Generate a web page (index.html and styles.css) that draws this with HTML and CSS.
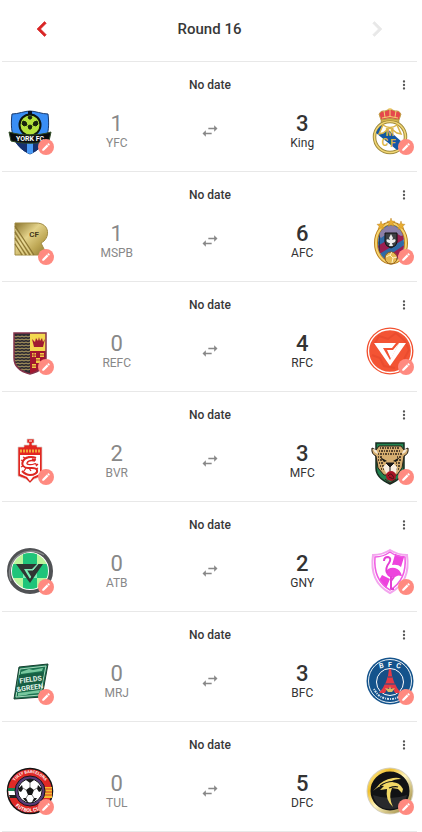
FILE: index.html
```html
<!DOCTYPE html>
<html lang="en">
<head>
	<meta charset="UTF-8">
	<meta name="viewport" content="width=device-width, initial-scale=1.0">
	<link rel="stylesheet" href="styles.css">
	<title>Round 16</title>
</head>
<body>
	<svg class="sprite" aria-hidden="true">
		<symbol id="prev" viewBox="0 0 24 24"><path d="M15.41 7.41 14 6l-6 6 6 6 1.41-1.41L10.83 12z"/></symbol>
		<symbol id="next" viewBox="0 0 24 24"><path d="M10 6 8.59 7.41 13.17 12l-4.58 4.59L10 18l6-6z"/></symbol>
		<symbol id="more" viewBox="0 0 24 24"><path d="M12 8a2 2 0 1 0 0-4 2 2 0 0 0 0 4zm0 2a2 2 0 1 0 0 4 2 2 0 0 0 0-4zm0 6a2 2 0 1 0 0 4 2 2 0 0 0 0-4z"/></symbol>
		<symbol id="swap" viewBox="0 0 24 24"><path d="M6.99 11 3 15l3.99 4v-3H14v-2H6.99v-3zM21 9l-3.99-4v3H10v2h7.01v3L21 9z"/></symbol>
		<symbol id="pencil" viewBox="0 0 24 24"><path d="M3 17.25V21h3.75L17.81 9.94l-3.75-3.75L3 17.25zM20.71 7.04a1 1 0 0 0 0-1.41l-2.34-2.34a1 1 0 0 0-1.41 0l-1.83 1.83 3.75 3.75 1.83-1.83z"/></symbol>
	</svg>
	<main class="fixtures">
		<header class="header">
			<button class="nav" aria-label="Previous round"><svg><use href="#prev"/></svg></button>
			<h1>Round 16</h1>
			<button class="nav next" aria-label="Next round" disabled><svg><use href="#next"/></svg></button>
		</header>

		<section class="match">
			<div class="match-head">
				<p>No date</p>
				<button class="more" aria-label="Options"><svg><use href="#more"/></svg></button>
			</div>
			<div class="teams">
				<div class="logo">
					<svg viewBox="0 0 48 48">
						<path d="M6 7C12 7 19 4 24 4s12 3 18 3c2 16 0 32-18 40C6 39 4 23 6 7z" fill="#3a8ef5" stroke="#17386d"/>
						<path d="M8 32h32c-3 7-9 12-16 15C17 44 11 39 8 32z" fill="#16316f"/>
						<path d="M21 33h6v13l-3 1-3-1z" fill="#4a9bf7"/>
						<path d="M22 4h4v7h-4z" fill="#0b1222"/>
						<circle cx="24" cy="18" r="10.5" fill="#b3e23c" stroke="#0d1610" stroke-width="2"/>
						<path d="m22 10 2-1 2 1-1 2h-2zM17 14l3 1 1 3-3 1-2-2zM31 14l-3 1-1 3 3 1 2-2zM22 19l2-1 2 1-1 3h-2z" fill="#17230d" stroke="#17230d"/>
						<path d="M3 25c14 4 28 4 42 0l-2 9c-13 3-25 3-38 0z" fill="#0a0d10" stroke="#304b25"/>
						<text x="24" y="34" class="york">YORK FC</text>
					</svg>
					<button class="edit" aria-label="Edit score"><svg><use href="#pencil"/></svg></button>
				</div>
				<div class="team"><strong>1</strong><span>YFC</span></div>
				<svg class="swap"><use href="#swap"/></svg>
				<div class="team winner"><strong>3</strong><span>King</span></div>
				<div class="logo">
					<svg viewBox="0 0 48 48">
						<circle cx="24" cy="30" r="15.5" fill="#fff" stroke="#a08c3f" stroke-width="3.5"/>
						<circle cx="24" cy="30" r="15.5" fill="none" stroke="#f3d775" stroke-width="1.5"/>
						<path d="M10 26q2-6 7-8l20 18q-2 5-6 7z" fill="#1257a4"/>
						<path d="M17 18q7 5 14 0l4 9-4-1-7-5-7 5-4 1z" fill="#fff" stroke="#d9b449" stroke-width="1.500"/>
						<text x="24" y="29" class="monogram">M</text>
						<text x="19" y="39" class="monogram">C</text>
						<text x="27" y="40" class="monogram">F</text>
						<path d="M15 13 13 7q2-4 6-3l5-2 5 2q4-1 6 3l-2 6q-9-3-18 0z" fill="#e5484d" stroke="#c2a448"/>
						<path d="M16 11q8-3 16 0M18 4l1 6M30 4l-1 6M24 1v9M22 2h4" fill="none" stroke="#f2d273"/>
						<path d="M15 13q9-3 18 0v2q-9-3-18 0z" fill="#d8b64c" stroke="#9b8235" stroke-width=".5"/>
					</svg>
					<button class="edit" aria-label="Edit score"><svg><use href="#pencil"/></svg></button>
				</div>
			</div>
		</section>

		<section class="match">
			<div class="match-head">
				<p>No date</p>
				<button class="more" aria-label="Options"><svg><use href="#more"/></svg></button>
			</div>
			<div class="teams">
				<div class="logo">
					<svg viewBox="0 0 48 48">
						<defs>
							<linearGradient id="gold" x2="1" y2="1">
								<stop offset="0" stop-color="#8a742d"/>
								<stop offset=".4" stop-color="#e3d28a"/>
								<stop offset=".7" stop-color="#bda653"/>
								<stop offset="1" stop-color="#8a7430"/>
							</linearGradient>
						</defs>
						<path d="M9 6h21c15 0 14 16 5 20l6 12H9z" fill="url(#gold)" stroke="#a08b43"/>
						<path d="M9 9l19 29M9 15l15 23M9 21l11 17M9 27l7 11" stroke="#8a7432" stroke-width="1.2"/>
						<path d="M9 12l17 26M9 18l13 20M9 24l9 14" stroke="#efe2a6" stroke-width=".7"/>
						<text x="28" y="20" class="cf">CF</text>
					</svg>
					<button class="edit" aria-label="Edit score"><svg><use href="#pencil"/></svg></button>
				</div>
				<div class="team"><strong>1</strong><span>MSPB</span></div>
				<svg class="swap"><use href="#swap"/></svg>
				<div class="team winner"><strong>6</strong><span>AFC</span></div>
				<div class="logo">
					<svg viewBox="0 0 48 48">
						<clipPath id="oval"><ellipse cx="25" cy="26" rx="13" ry="18"/></clipPath>
						<ellipse cx="25" cy="26" rx="15" ry="19.5" fill="#fff" stroke="#b97f1f" stroke-width="4"/>
						<ellipse cx="25" cy="26" rx="15" ry="19.5" fill="none" stroke="#f5d470" stroke-width="2"/>
						<g clip-path="url(#oval)">
							<path d="M10 5h30v42H10z" fill="#2f6aa6"/>
							<path d="M10 30 40 12v9L10 39zM10 47l30-20v8L18 50z" fill="#9a1f50"/>
							<path d="M12 18q13-19 26 0l-3 1q-9-7-20 2z" fill="#8b7fa8"/>
							<path d="M12 9q2 2 1 34" fill="none" stroke="#27324a"/>
						</g>
						<path d="M19 16h12v9q0 4-6 6-6-2-6-6z" fill="#3d4144" stroke="#111"/>
						<path d="m25 17 2 4-1 2q5-2 3 2l-2 1h-1l1 3h-4l1-3h-1l-2-1q-2-4 3-2l-1-2z" fill="#eee"/>
						<circle cx="25" cy="41" r="6" fill="#e5bb56" stroke="#8d5b1c"/>
						<path d="M20 40l4-2 2-3m-2 3 3 3 4-1m-4 1-1 5" fill="none" stroke="#fff1c5"/>
						<path d="m25 1 1 3 3 .3-2 2 .8 3L25 8l-2.800 1.300.8-3-2-2 3-.3zM15 4l1 3 3 .3-2 2 .8 3L15 11l-2.800 1.300.8-3-2-2 3-.3zM35 4l1 3 3 .3-2 2 .8 3L35 11l-2.800 1.300.8-3-2-2 3-.3z" fill="#e7ac31" stroke="#b77c1d" stroke-width=".4"/>
					</svg>
					<button class="edit" aria-label="Edit score"><svg><use href="#pencil"/></svg></button>
				</div>
			</div>
		</section>

		<section class="match">
			<div class="match-head">
				<p>No date</p>
				<button class="more" aria-label="Options"><svg><use href="#more"/></svg></button>
			</div>
			<div class="teams">
				<div class="logo">
					<svg viewBox="0 0 48 48">
						<clipPath id="castle"><path d="M8 6h32v25q0 12-16 16Q8 43 8 31z"/></clipPath>
						<g clip-path="url(#castle)">
							<path d="M8 6h16v41H8z" fill="#302d32"/>
							<path d="M24 6h16v18H24z" fill="#f4d84f"/>
							<path d="M24 24h16v23H24z" fill="#a3162f"/>
							<path d="M8 9l2 1 2-1 2 1 2-1 2 1 2-1 2 1 2-1M8 12l2 1 2-1 2 1 2-1 2 1 2-1 2 1 2-1M8 15l2 1 2-1 2 1 2-1 2 1 2-1 2 1 2-1M8 18l2 1 2-1 2 1 2-1 2 1 2-1 2 1 2-1M8 21l2 1 2-1 2 1 2-1 2 1 2-1 2 1 2-1M8 24l2 1 2-1 2 1 2-1 2 1 2-1 2 1 2-1M8 27l2 1 2-1 2 1 2-1 2 1 2-1 2 1 2-1M8 30l2 1 2-1 2 1 2-1 2 1 2-1 2 1 2-1M8 33l2 1 2-1 2 1 2-1 2 1 2-1 2 1 2-1M8 36l2 1 2-1 2 1 2-1 2 1 2-1 2 1 2-1M8 39l2 1 2-1 2 1 2-1 2 1 2-1 2 1 2-1M8 42l2 1 2-1 2 1 2-1 2 1 2-1 2 1 2-1" fill="none" stroke="#b8a464"/>
						</g>
						<path d="m26 12 3 3 1-4 2 3 1-4 1 4 2-3 1 4 2-3-2 8h-9z" fill="#a11c31"/>
						<path d="M26 26h4v4h-4zM30 31h4v5h-4zM34 26h4v4h-4zM26 37h4v4h-4z" fill="#f0ca45"/>
						<path d="M25 28h6M28 25v6M29 33h6M33 28h6M25 39h6" stroke="#a3162f" stroke-width=".8"/>
						<path d="M8 6h32v25q0 12-16 16Q8 43 8 31z" fill="none" stroke="#85334a" stroke-width="1.500"/>
					</svg>
					<button class="edit" aria-label="Edit score"><svg><use href="#pencil"/></svg></button>
				</div>
				<div class="team"><strong>0</strong><span>REFC</span></div>
				<svg class="swap"><use href="#swap"/></svg>
				<div class="team winner"><strong>4</strong><span>RFC</span></div>
				<div class="logo">
					<svg viewBox="0 0 48 48">
						<circle cx="24" cy="24" r="23.500" fill="#f2502f"/>
						<circle cx="24" cy="24" r="21.500" fill="#f35434" stroke="#fff" stroke-width="1.300"/>
						<path d="M8 18l5-9 9 3 8-6 9 8 4 9-5 9M6 28l8 3 4 8 11 2" fill="none" stroke="#ea4c2f" stroke-width="2"/>
						<path d="M8 16h22l-4 5h-9l7 12 9-17h7L24 39z" fill="#fff"/>
						<path d="M21 23h6l6-7-8 16z" fill="#fff"/>
						<path d="m32 15-5 7h-6" fill="none" stroke="#f2502f"/>
					</svg>
					<button class="edit" aria-label="Edit score"><svg><use href="#pencil"/></svg></button>
				</div>
			</div>
		</section>

		<section class="match">
			<div class="match-head">
				<p>No date</p>
				<button class="more" aria-label="Options"><svg><use href="#more"/></svg></button>
			</div>
			<div class="teams">
				<div class="logo">
					<svg viewBox="0 0 48 48">
						<path d="M18 10V8h5V6h-2V2h7v4h-2v2h5v2h5v29l-8 3-4 4-4-4-8-3V10z" fill="#e32620" stroke="#d9cfc9" stroke-width=".7"/>
						<path d="M14 18h20v19l-7 3-3 4-3-4-7-3z" fill="#fff"/>
						<path d="M23 4h3" stroke="#fff"/>
						<path d="M14 14h20" stroke="#f4a638" stroke-width="3" stroke-dasharray="2 1"/>
						<path d="M30 21c-5-2-11-1-13 3s1 7 5 7 8-1 9 2-3 5-7 5-6-2-8-4" fill="none" stroke="#dd2821" stroke-width="2"/>
						<path d="M29 24c-4-1-7 0-8 2s5 2 7 1 3 1 2 2M19 21l-2-1m0 4-2-1m2 6-2 1m15-1 2-2m-6-5 4 1m-7 8 2 3m-5-3-2 3m12-2 2-1M23 20v-1" fill="none" stroke="#dd2821" stroke-width="1.300"/>
					</svg>
					<button class="edit" aria-label="Edit score"><svg><use href="#pencil"/></svg></button>
				</div>
				<div class="team"><strong>2</strong><span>BVR</span></div>
				<svg class="swap"><use href="#swap"/></svg>
				<div class="team winner"><strong>3</strong><span>MFC</span></div>
				<div class="logo">
					<svg viewBox="0 0 48 48">
						<path d="M10 6h28v25q0 10-14 16Q10 41 10 31z" fill="#21834f" stroke="#172d21" stroke-width="1.500"/>
						<path d="M13 9h22l3 4 4-2q1 6-4 8l-2 12-5 7H18l-6-7-2-12q-5-2-4-8l4 2z" fill="#d5ae70" stroke="#292019"/>
						<path d="M7 12q4 0 5 5-4-1-5-5zM41 12q-4 0-5 5 4-1 5-5z" fill="#f4e8d5"/>
						<path d="M14 11h20M13 14h22M12 17h24M12 20h5m14 0h5M12 23h5m14 0h5M13 26h5m12 0h5M14 29h4m12 0h4M15 32h3m12 0h3" fill="none" stroke="#302319" stroke-width="1.500" stroke-dasharray="1 1 2 1"/>
						<path d="m14 20 7 4-3 1zM34 20l-7 4 3 1z" fill="#181713"/>
						<path d="m17 30 4-4h6l4 4-1 6-5 2-5-2z" fill="#f8eee0"/>
						<path d="M20 26h8l-4 4zM24 30v4" fill="#1a1918" stroke="#1a1918"/>
						<circle cx="25" cy="39" r="5" fill="#a71525"/>
						<path d="M22 39q3-4 5 0t-2 2l-2-1M19 42l5 4 6-4" fill="none" stroke="#4b1218"/>
					</svg>
					<button class="edit" aria-label="Edit score"><svg><use href="#pencil"/></svg></button>
				</div>
			</div>
		</section>

		<section class="match">
			<div class="match-head">
				<p>No date</p>
				<button class="more" aria-label="Options"><svg><use href="#more"/></svg></button>
			</div>
			<div class="teams">
				<div class="logo">
					<svg viewBox="0 0 48 48">
						<clipPath id="check"><circle cx="24" cy="24" r="18"/></clipPath>
						<circle cx="24" cy="24" r="21" fill="#fff" stroke="#505255" stroke-width="4"/>
						<path d="M5 34A22 22 0 0 1 38 8" fill="none" stroke="#85888a" stroke-width="1.500"/>
						<g clip-path="url(#check)">
							<path d="M4 4h40v40H4z" fill="#baf59c"/>
							<path d="M17 4h14v13H17zM4 17h13v14H4zM31 17h13v14H31zM17 31h14v13H17z" fill="#1fc47a"/>
							<path d="M17 17h14v14H17z" fill="#7af0b6"/>
						</g>
						<path d="M10 17h21l-5 5h-8l6 10 8-15h5L24 36z" fill="#303633"/>
						<path d="M21 23h6l5-6h2l-8 14z" fill="#303633"/>
						<path d="m32 17-5 6h-6" fill="none" stroke="#8fe9bd"/>
					</svg>
					<button class="edit" aria-label="Edit score"><svg><use href="#pencil"/></svg></button>
				</div>
				<div class="team"><strong>0</strong><span>ATB</span></div>
				<svg class="swap"><use href="#swap"/></svg>
				<div class="team winner"><strong>2</strong><span>GNY</span></div>
				<div class="logo">
					<svg viewBox="0 0 48 48">
						<clipPath id="pink"><path d="M9 9q8 0 15-5 7 5 15 5 3 24-15 35Q6 33 9 9z"/></clipPath>
						<path d="M7 8q9 0 17-5 8 5 17 5 4 27-17 38Q3 35 7 8z" fill="#fff" stroke="#f3a5ee" stroke-width="2"/>
						<g clip-path="url(#pink)">
							<path d="m30 4 9 3-4 13q-3-3-9-2zM16 28l8 4-5 12q-6-4-8-7z" fill="#ed43dd"/>
						</g>
						<path d="M9 10q8 0 15-5 7 5 15 5 2 23-15 33Q7 33 9 10z" fill="none" stroke="#f05be3" stroke-width="1.500"/>
						<path d="M20 25q2-5 9-4 5 1 7 8-4-1-5 0-5 3-9 0-2-2-2-4z" fill="#ed43dd"/>
						<path d="M18 14q0-4 4-4 4 1 1 6-4 5-2 10M25 29v13m0-8 3-4m-3 12h3" fill="none" stroke="#e33fd3" stroke-width="2"/>
					</svg>
					<button class="edit" aria-label="Edit score"><svg><use href="#pencil"/></svg></button>
				</div>
			</div>
		</section>

		<section class="match">
			<div class="match-head">
				<p>No date</p>
				<button class="more" aria-label="Options"><svg><use href="#more"/></svg></button>
			</div>
			<div class="teams">
				<div class="logo">
					<svg viewBox="0 0 48 48">
						<path d="m13 10 29-3-6 33-28 2z" fill="#1b7350" stroke="#173f30"/>
						<path d="m14 12 26-3-6 29-24 2z" fill="none" stroke="#a9d8bd"/>
						<path d="m15 15 8-3 4 1 10-2-1 3-21 3zM12 36l8-1 14-2-1 3-10 1-3 1-8 1z" fill="#77c79e"/>
						<path d="m13 18 25-3-3 17-25 3z" fill="#175f43"/>
						<g transform="rotate(-8 24 25)">
							<text x="25" y="25" class="fields">FIELDS</text>
							<text x="23" y="33" class="fields">&amp;GREEN</text>
						</g>
					</svg>
					<button class="edit" aria-label="Edit score"><svg><use href="#pencil"/></svg></button>
				</div>
				<div class="team"><strong>0</strong><span>MRJ</span></div>
				<svg class="swap"><use href="#swap"/></svg>
				<div class="team winner"><strong>3</strong><span>BFC</span></div>
				<div class="logo">
					<svg viewBox="0 0 48 48">
						<circle cx="24" cy="24" r="23.500" fill="#14538c"/>
						<circle cx="24" cy="24" r="21.500" fill="none" stroke="#e8f0f5"/>
						<circle cx="24" cy="25" r="13.500" fill="#174f87" stroke="#fff"/>
						<path d="M23 12h2q1 14 10 24h-6q-2-5-5-5t-5 5h-6q9-10 10-24z" fill="#e63a46"/>
						<path d="M22 20h4M19 27h10" stroke="#174f87"/>
						<path d="m24 29 1 3 4-1-3 4h-4l-3-4 4 1z" fill="#d9bd65"/>
						<text x="16" y="11" class="paris" transform="rotate(-14 16 11)">B</text>
						<text x="24" y="10" class="paris">F</text>
						<text x="32" y="11" class="paris" transform="rotate(14 32 11)">C</text>
						<path d="M8 32q5 10 16 10t16-10" fill="none" stroke="#d6e2eb" stroke-width="2" stroke-dasharray="1 1 2 1"/>
					</svg>
					<button class="edit" aria-label="Edit score"><svg><use href="#pencil"/></svg></button>
				</div>
			</div>
		</section>

		<section class="match">
			<div class="match-head">
				<p>No date</p>
				<button class="more" aria-label="Options"><svg><use href="#more"/></svg></button>
			</div>
			<div class="teams">
				<div class="logo">
					<svg viewBox="0 0 48 48">
						<circle cx="24" cy="24" r="22.500" fill="#df2926" stroke="#131313" stroke-width="1.500"/>
						<path d="M2 21h8v9H3z" fill="#fff"/>
						<path d="M2 21h8v3H2z" fill="#1b8051"/>
						<path d="M3 28h8v3H4z" fill="#222"/>
						<path d="M38 20h8v11h-8z" fill="#f4bd2e"/>
						<path d="M38 22h8m-8 3h8m-8 3h8" stroke="#d63525"/>
						<path id="upper" d="M6 24a18 18 0 0 1 36 0" fill="none"/>
						<text class="club"><textPath href="#upper" startOffset="50%">TULLY BARCELONA</textPath></text>
						<path id="lower" d="M3 24a21 21 0 0 0 42 0" fill="none"/>
						<text class="club low"><textPath href="#lower" startOffset="50%">FUTBOL CLUB</textPath></text>
						<circle cx="24" cy="24" r="15" fill="#593b78" stroke="#191519"/>
						<circle cx="24" cy="24" r="12" fill="#fff" stroke="#171717"/>
						<path d="m24 20 4 3-2 5h-4l-2-5zM20 13q4-2 8 0l-4 3zM13 21l3-3 1 4-2 3-2-1zM35 21l-3-3-1 4 2 3 2-1zM17 31l3 0 2 4q-3 0-5-4zM31 31h-3l-2 4q3 0 5-4z" fill="#151515"/>
						<path d="M24 16v4m-7 1 3 2m11-2-3 2m-2 5 2 3m-6-3-2 3" stroke="#222" stroke-width=".6"/>
					</svg>
					<button class="edit" aria-label="Edit score"><svg><use href="#pencil"/></svg></button>
				</div>
				<div class="team"><strong>0</strong><span>TUL</span></div>
				<svg class="swap"><use href="#swap"/></svg>
				<div class="team winner"><strong>5</strong><span>DFC</span></div>
				<div class="logo">
					<svg viewBox="0 0 48 48">
						<defs>
							<linearGradient id="ring" x2="1" y2="1">
								<stop offset="0" stop-color="#fff1a0"/>
								<stop offset=".25" stop-color="#f0c02e"/>
								<stop offset=".5" stop-color="#fff4bb"/>
								<stop offset="1" stop-color="#8f7930"/>
							</linearGradient>
						</defs>
						<circle cx="24" cy="24" r="22" fill="#111214" stroke="#d6d0be" stroke-width="3"/>
						<circle cx="24" cy="24" r="21" fill="none" stroke="url(#ring)" stroke-width="3"/>
						<path d="M7 28q17 6 34 0-3 14-17 14T7 28z" fill="#292a2c"/>
						<path d="M11 20q5-7 16-9 5-1 8 1-7 0-11 3 9-1 13 7l-1 4-4-4-6-1q-4 9 1 19-8-7-6-18l-7 1 4-4q-4-1-11 5z" fill="#f2d866"/>
						<path d="M14 19q8-6 17-4m-8 6q6-2 9-1" fill="none" stroke="#111214" stroke-width="1.200"/>
					</svg>
					<button class="edit" aria-label="Edit score"><svg><use href="#pencil"/></svg></button>
				</div>
			</div>
		</section>
	</main>
</body>
</html>
```

FILE: styles.css
```css
*{
	padding: 0;
	margin: 0;
	box-sizing: border-box;
}
body{
	background-color: #fff;
	color: #383838;
	font-family: Roboto, Arial, sans-serif;
	font-size: 12px;
}
button{
	display: flex;
	align-items: center;
	justify-content: center;
	border: none;
	background-color: transparent;
	cursor: pointer;
}
svg{
	display: block;
	fill: currentColor;
}
.sprite{
	display: none;
}
.fixtures{
	margin: 0 5px 0 2px;
}
.header{
	display: flex;
	align-items: center;
	justify-content: space-between;
	padding: 14px 25px 17px;
	border-bottom: 1px solid #e8e8e8;
}
.header h1{
	font-size: 15px;
	font-weight: 500;
	line-height: 20px;
}
.nav{
	color: #d92525;
}
.nav svg{
	width: 30px;
	height: 30px;
	stroke: currentColor;
	stroke-width: 0.5;
}
.next{
	color: #e8e8e8;
	cursor: default;
}
.match{
	padding: 13px 3px 16px 4px;
	border-bottom: 1px solid #e8e8e8;
}
.match-head{
	display: grid;
	grid-template-columns: 1fr auto 1fr;
	align-items: center;
	margin-bottom: 12px;
}
.match-head p{
	grid-column: 2;
	font-weight: 500;
	line-height: 20px;
}
.more{
	justify-self: end;
	width: 20px;
	height: 20px;
	color: #555;
}
.more svg{
	width: 14px;
	height: 14px;
}
.teams{
	display: grid;
	grid-template-columns: 49px 1fr 62px 1fr 50px;
	align-items: center;
}
.logo{
	position: relative;
	width: 48px;
	height: 48px;
}
.logo:last-child{
	justify-self: end;
}
.logo > svg{
	width: 48px;
	height: 48px;
}
.edit{
	position: absolute;
	right: 0;
	bottom: 0;
	width: 16px;
	height: 16px;
	border-radius: 50%;
	background-color: #ff8a80;
	color: #fff;
}
.edit svg{
	width: 10px;
	height: 10px;
}
.team{
	display: flex;
	flex-direction: column;
	align-items: center;
	color: #888;
}
.team strong{
	font-size: 22px;
	font-weight: 400;
	line-height: 24px;
}
.team span{
	line-height: 14px;
}
.winner{
	color: #333;
}
.winner strong{
	font-weight: 500;
}
.swap{
	justify-self: center;
	width: 20px;
	height: 20px;
	color: #888;
}

/* lettering inside the crests */
.logo text{
	text-anchor: middle;
	font-family: Roboto, Arial, sans-serif;
	font-weight: 700;
}
.york{
	font-size: 7px;
	fill: #fff;
}
.monogram{
	font-size: 10px;
	fill: #d9b449;
}
.cf{
	font-size: 8px;
	fill: #45391a;
}
.fields{
	font-size: 7px;
	fill: #e6f5ec;
}
.paris{
	font-size: 7px;
	fill: #fff;
}
.club{
	font-size: 4px;
	fill: #fff;
}
.low{
	font-size: 5px;
}
```
